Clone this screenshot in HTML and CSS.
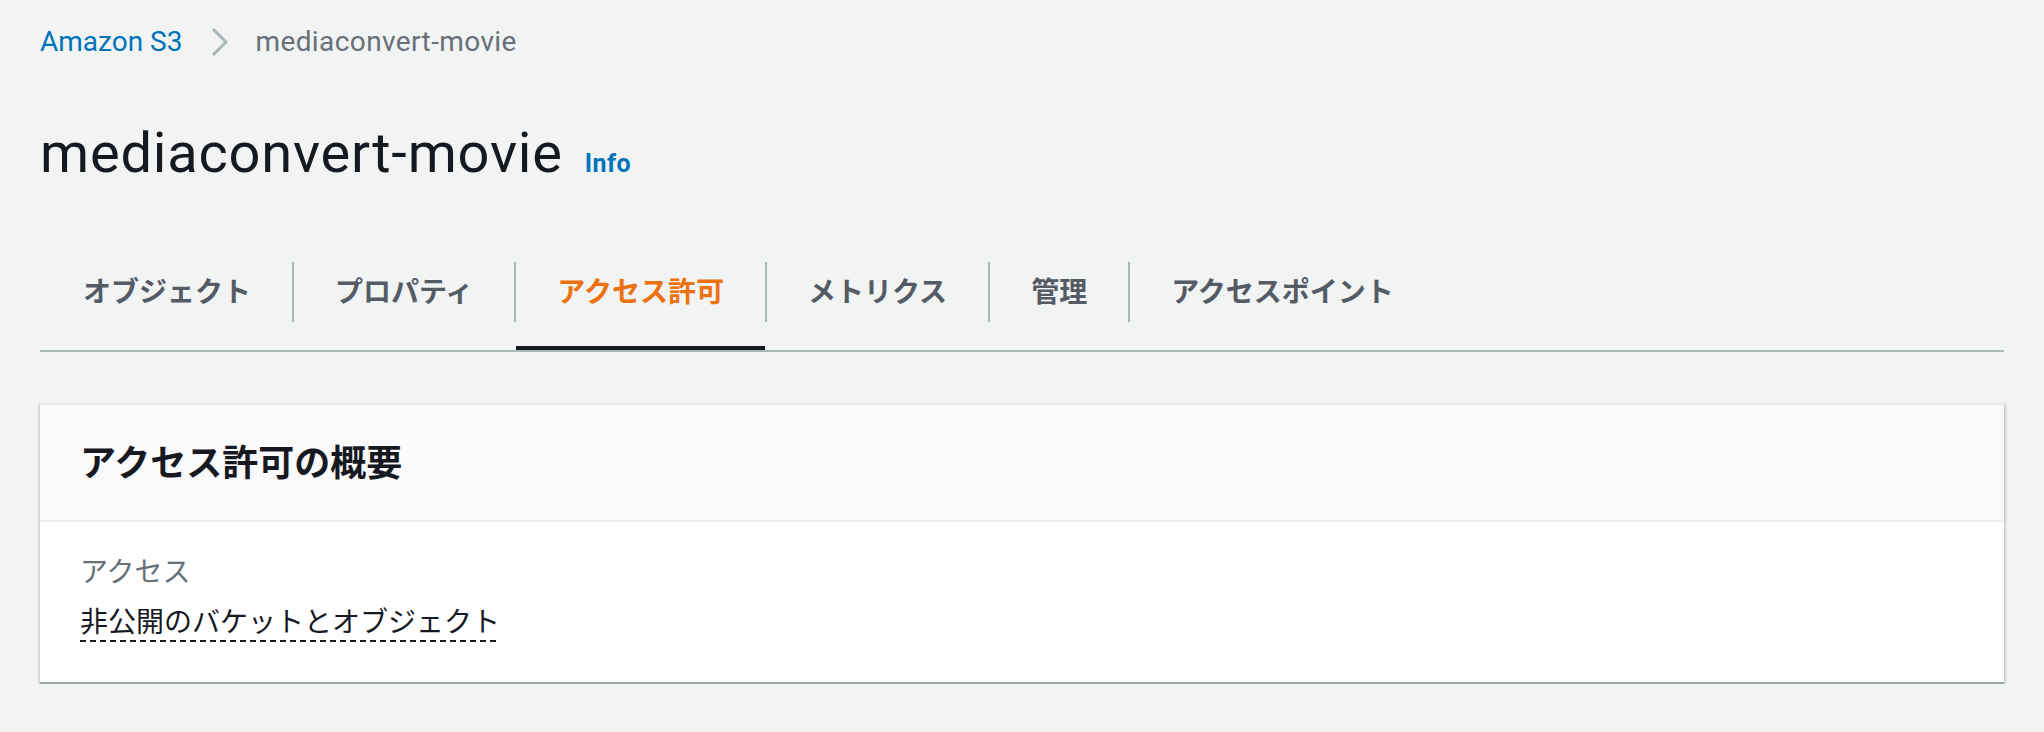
FILE: index.html
```html
<!DOCTYPE html>
<html lang="ja">
<head>
<meta charset="utf-8">
<title>mediaconvert-movie</title>
<link rel="stylesheet" href="styles.css">
</head>
<body>
<div class="page">
  <nav class="breadcrumbs">
    <a class="crumb-link">Amazon S3</a>
    <svg class="crumb-sep" width="18" height="30" viewBox="0 0 18 30"><polyline points="3,2 16,15 3,28" fill="none" stroke="#aab7b8" stroke-width="3"/></svg>
    <span class="crumb-current">mediaconvert-movie</span>
  </nav>

  <div class="page-header">
    <h1 class="title">mediaconvert-movie</h1>
    <a class="info">Info</a>
  </div>

  <div class="tabs">
    <a class="tab first">オブジェクト</a>
    <span class="tab-sep"></span>
    <a class="tab">プロパティ</a>
    <span class="tab-sep"></span>
    <a class="tab active">アクセス許可</a>
    <span class="tab-sep"></span>
    <a class="tab">メトリクス</a>
    <span class="tab-sep"></span>
    <a class="tab">管理</a>
    <span class="tab-sep"></span>
    <a class="tab">アクセスポイント</a>
  </div>

  <section class="card">
    <div class="card-header">
      <h2 class="card-title">アクセス許可の概要</h2>
    </div>
    <div class="card-body">
      <div class="kv-label">アクセス</div>
      <div class="kv-value"><span class="dashed">非公開のバケットとオブジェクト</span></div>
    </div>
  </section>
</div>
</body>
</html>
```

FILE: styles.css
```css
html, body {
  margin: 0;
  padding: 0;
}

body {
  background: #f2f3f3;
  font-family: Roboto, "Noto Sans CJK JP", sans-serif;
  color: #16191f;
}

.page {
  padding: 22px 40px 0;
}

.breadcrumbs {
  display: flex;
  align-items: center;
  height: 40px;
  font-size: 28px;
  line-height: 40px;
}

.crumb-link {
  color: #0073bb;
}

.crumb-sep {
  flex: none;
  margin: 0 27px 0 28px;
}

.crumb-current {
  color: #687078;
  letter-spacing: 0.4px;
}

.page-header {
  display: flex;
  align-items: baseline;
  margin-top: 56px;
}

.title {
  margin: 0;
  font-size: 56px;
  line-height: 70px;
  font-weight: 400;
  letter-spacing: 0.8px;
  color: #16191f;
}

.info {
  margin-left: 22px;
  font-size: 25px;
  font-weight: 700;
  letter-spacing: 0.5px;
  color: #0073bb;
}

.tabs {
  display: flex;
  align-items: flex-start;
  margin-top: 74px;
  border-bottom: 2px solid #aab7b8;
}

.tab {
  font-family: "Noto Sans CJK JP", sans-serif;
  font-size: 28px;
  font-weight: 700;
  line-height: 56px;
  color: #545b64;
  padding: 0 41px 28px;
  border-bottom: 4px solid transparent;
  white-space: nowrap;
}

.tab.first {
  padding-left: 43px;
}

.tab.active {
  color: #ec7211;
  border-bottom-color: #16191f;
}

.tab-sep {
  flex: none;
  width: 2px;
  height: 60px;
  background: #aab7b8;
}

.card {
  margin-top: 51px;
  background: #fff;
  border-top: 2px solid #eaeded;
  border-bottom: 2px solid #9ea6ac;
  box-shadow: 0 1px 1px 0 rgba(0, 28, 36, 0.3), 2px 1px 2px 0 rgba(0, 28, 36, 0.15), -2px 1px 2px 0 rgba(0, 28, 36, 0.1);
}

.card-header {
  background: #fafafa;
  padding: 33px 40px 38px;
  border-bottom: 2px solid #eaeded;
}

.card-title {
  margin: 0;
  font-family: "Noto Sans CJK JP", sans-serif;
  font-size: 36px;
  line-height: 44px;
  font-weight: 700;
  color: #16191f;
}

.card-body {
  padding: 28px 40px 40px;
  font-family: "Noto Sans CJK JP", sans-serif;
  font-size: 28px;
  line-height: 40px;
}

.kv-label {
  color: #687078;
  margin-bottom: 10px;
}

.kv-value {
  color: #16191f;
}

.dashed {
  display: inline-block;
  padding-bottom: 2px;
  background-image: repeating-linear-gradient(to right, #16191f 0, #16191f 6px, transparent 6px, transparent 10px);
  background-size: 100% 2px;
  background-position: left bottom;
  background-repeat: no-repeat;
}
```
